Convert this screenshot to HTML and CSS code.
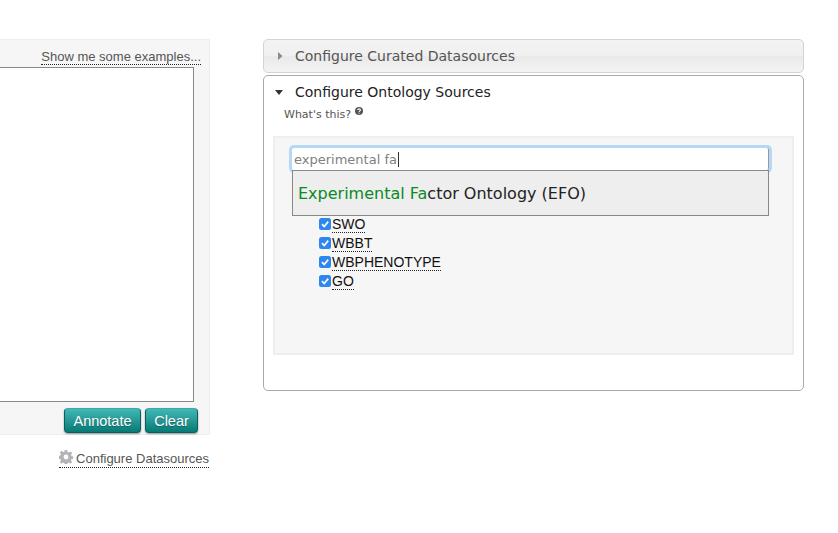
FILE: index.html
```html
<!DOCTYPE html>
<html lang="en">
<head>
  <meta charset="UTF-8" />
  <title>Annotator</title>
  <link rel="stylesheet" href="styles.css">
</head>
<body>
  <div class="page">
    <div class="left">
      <div class="form-panel">
        <div class="examples"><a class="dotted">Show me some examples...</a></div>
        <div class="textbox"></div>
        <div class="actions">
          <button class="btn btn-annotate" type="button">Annotate</button>
          <button class="btn btn-clear" type="button">Clear</button>
        </div>
      </div>
      <div class="configure">
        <a class="dotted configure-link">
          <svg class="gear" width="14" height="14" viewBox="0 0 14 14">
            <path fill="#b4b4b6" fill-rule="evenodd" d="M5.8 0h2.4l.3 2 1.3.6 1.7-1.2 1.7 1.7-1.2 1.7.6 1.3 2 .3v2.4l-2 .3-.6 1.3 1.2 1.7-1.7 1.700-1.700-1.200-1.300.6-.3 2H5.800l-.3-2-1.300-.6-1.700 1.200-1.700-1.700 1.200-1.700-.6-1.300-2-.3V5.800l2-.3.6-1.300-1.200-1.700 1.700-1.700 1.700 1.200 1.300-.6zM7 4.600a2.400 2.400 0 1 0 0 4.800 2.400 2.400 0 0 0 0-4.800z"/>
          </svg>
          Configure Datasources
        </a>
      </div>
    </div>

    <div class="right">
      <div class="acc-head">
        <svg class="arrow" width="5" height="8" viewBox="0 0 5 8"><path fill="#8a8a8a" d="M0 0l4.500 4L0 8z"/></svg>
        <span>Configure Curated Datasources</span>
      </div>
      <div class="acc-open">
        <div class="acc-title">
          <svg class="arrow-down" width="8" height="5" viewBox="0 0 8 5"><path fill="#333" d="M0 0h8L4 5z"/></svg>
          <span>Configure Ontology Sources</span>
        </div>
        <div class="whats">
          <span class="whats-text">What's this?</span>
          <svg class="help" width="8" height="8" viewBox="0 0 8 8">
            <circle cx="4" cy="4" r="4" fill="#555"/>
            <path fill="none" stroke="#fff" stroke-width="1.100" d="M2.700 3.100c0-1.700 2.700-1.700 2.700 0 0 1-1.400 1-1.400 2"/>
            <rect x="3.500" y="5.700" width="1" height="1" fill="#fff"/>
          </svg>
        </div>
        <div class="well">
          <div class="search">
            <div class="search-input">experimental fa<span class="caret"></span></div>
            <div class="suggest"><span class="match">Experimental Fa</span>ctor Ontology (EFO)</div>
          </div>
          <ul class="sources">
            <li><svg class="check" width="12" height="12" viewBox="0 0 12 12"><rect width="12" height="12" rx="2.500" fill="#2e86ef"/><path fill="none" stroke="#fff" stroke-width="1.700" d="M3 6.200l2.200 2.300L9.200 3.600"/></svg><span class="dotted">SWO</span></li>
            <li><svg class="check" width="12" height="12" viewBox="0 0 12 12"><rect width="12" height="12" rx="2.500" fill="#2e86ef"/><path fill="none" stroke="#fff" stroke-width="1.700" d="M3 6.200l2.200 2.300L9.200 3.600"/></svg><span class="dotted">WBBT</span></li>
            <li><svg class="check" width="12" height="12" viewBox="0 0 12 12"><rect width="12" height="12" rx="2.500" fill="#2e86ef"/><path fill="none" stroke="#fff" stroke-width="1.700" d="M3 6.200l2.200 2.300L9.200 3.600"/></svg><span class="dotted">WBPHENOTYPE</span></li>
            <li><svg class="check" width="12" height="12" viewBox="0 0 12 12"><rect width="12" height="12" rx="2.500" fill="#2e86ef"/><path fill="none" stroke="#fff" stroke-width="1.700" d="M3 6.200l2.200 2.300L9.200 3.600"/></svg><span class="dotted">GO</span></li>
          </ul>
        </div>
      </div>
    </div>
  </div>
</body>
</html>
```

FILE: styles.css
```css
html, body {
  margin: 0;
  padding: 0;
  background: #fff;
  overflow: hidden;
}

body {
  font-family: "Liberation Sans", Arial, sans-serif;
  font-size: 13px;
  color: #333;
}

.page {
  display: flex;
  align-items: flex-start;
  padding-top: 39px;
  height: 494px;
}

.dotted {
  border-bottom: 1px dotted #222;
}

/* left column */
.left {
  width: 210px;
  flex: none;
}

.form-panel {
  box-sizing: border-box;
  height: 396px;
  background: #f6f6f6;
  border: 1px solid #eee;
  border-left: none;
  padding: 9px 15px 0 0;
}

.examples {
  display: flex;
  justify-content: flex-end;
  margin-right: -7px;
  height: 18px;
  line-height: 15px;
  color: #555;
}

.examples .dotted {
  height: 15px;
}

.textbox {
  box-sizing: border-box;
  height: 335px;
  background: #fff;
  border: 1px solid #888;
  border-left: none;
}

.actions {
  display: flex;
  justify-content: flex-end;
  gap: 4px;
  margin: 6px -4px 0 0;
}

.btn {
  height: 25px;
  padding: 0;
  font-family: "Liberation Sans", Arial, sans-serif;
  font-size: 14.5px;
  color: #fff;
  text-shadow: 0 1px 1px rgba(0, 0, 0, 0.3);
  background: linear-gradient(#42b8b6, #067a74);
  border: 1px solid #0a5f5b;
  border-top-color: #3aa9a7;
  border-radius: 4px;
  box-shadow: 0 1px 2px rgba(0, 0, 0, 0.4);
}

.btn-annotate {
  width: 77px;
}

.btn-clear {
  width: 53px;
}

.configure {
  display: flex;
  justify-content: flex-end;
  margin: 16px 1px 0 0;
  color: #555;
}

.configure-link {
  display: flex;
  align-items: center;
  gap: 3px;
  height: 16px;
  line-height: 16px;
  white-space: nowrap;
}

.gear {
  flex: none;
  margin-top: -4px;
}

/* right column */
.right {
  width: 541px;
  margin-left: 53px;
  flex: none;
  font-family: "DejaVu Sans", Verdana, sans-serif;
}

.acc-head {
  box-sizing: border-box;
  display: flex;
  align-items: center;
  height: 34px;
  padding-left: 14px;
  font-size: 14px;
  color: #555;
  border: 1px solid #d3d3d3;
  border-radius: 5px;
  background: linear-gradient(#f3f3f3 0, #f0f0f0 50%, #e9e9e9 52%, #f4f4f4 100%);
}

.arrow {
  margin-right: 12px;
}

.acc-open {
  box-sizing: border-box;
  height: 316px;
  margin-top: 2px;
  padding: 0 9px;
  background: #fff;
  border: 1px solid #aaa;
  border-radius: 5px;
}

.acc-title {
  box-sizing: border-box;
  display: flex;
  align-items: center;
  height: 30px;
  padding: 2px 0 0 2px;
  font-size: 14px;
  color: #222;
}

.arrow-down {
  margin: 0 12px 0 0;
}

.whats {
  box-sizing: border-box;
  display: flex;
  align-items: flex-start;
  gap: 4px;
  height: 30px;
  padding: 1px 0 0 11px;
  font-size: 11px;
  line-height: 14px;
  color: #555;
}

.whats-text {
  margin-top: 1px;
}

.help {
  flex: none;
}

.well {
  box-sizing: border-box;
  height: 219px;
  background: #f6f6f6;
  border: 2px solid #eee;
  padding: 10px 0 0 17px;
}

.search {
  position: relative;
  width: 477px;
}

.search-input {
  box-sizing: border-box;
  height: 22px;
  padding-left: 2px;
  line-height: 23px;
  font-size: 13px;
  color: #808080;
  background: #fff;
  border-right: 1px solid #999;
  box-shadow: 0 0 0 3px #b5d8f8;
  border-radius: 2px;
}

.caret {
  display: inline-block;
  width: 1px;
  height: 15px;
  margin-left: 1px;
  vertical-align: -3px;
  background: #333;
}

.suggest {
  position: absolute;
  top: 22px;
  left: 0;
  right: 0;
  box-sizing: border-box;
  height: 46px;
  padding-left: 5px;
  line-height: 45px;
  font-size: 16px;
  color: #222;
  background: #eee;
  border: 1px solid #888;
}

.match {
  color: #098a26;
}

.sources {
  list-style: none;
  margin: 45px 0 0 27px;
  padding: 0;
  font-family: "Liberation Sans", Arial, sans-serif;
  font-size: 14px;
  color: #111;
}

.sources li {
  display: flex;
  align-items: center;
  height: 19px;
}

.sources .dotted {
  line-height: 15px;
  margin-top: 1px;
}

.check {
  flex: none;
  margin: -2px 1px 0 0;
}
```
